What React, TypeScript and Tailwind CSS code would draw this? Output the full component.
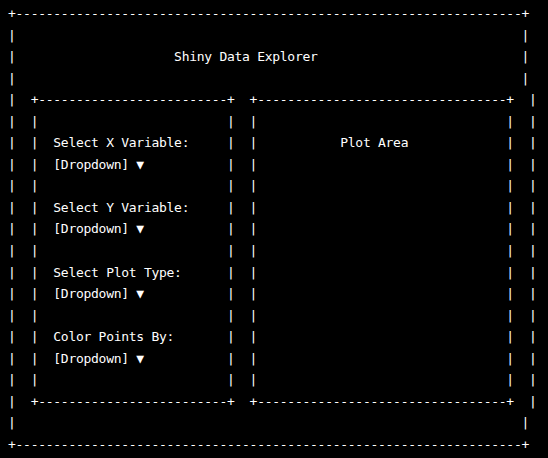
import React from 'react';

const pad = (s: string, n: number) => s + ' '.repeat(Math.max(0, n - s.length));

// left panel cell is 25 chars wide, right panel 33
const row = (left = '', right = '') =>
  '|  |' + pad(left ? '  ' + left : '', 25) + '|  |' + pad(right, 33) + '|  |';

const edge = '|  +' + '-'.repeat(25) + '+  +' + '-'.repeat(33) + '+  |';
const outerRule = '+' + '-'.repeat(67) + '+';
const outerBlank = '|' + ' '.repeat(67) + '|';

const controls = [
  'Select X Variable:',
  'Select Y Variable:',
  'Select Plot Type:',
  'Color Points By:',
];

const lines: string[] = [
  outerRule,
  outerBlank,
  '|' + pad(' '.repeat(21) + 'Shiny Data Explorer', 67) + '|',
  outerBlank,
  edge,
  row(),
  ...controls.flatMap((label, i) => [
    row(label, i === 0 ? ' '.repeat(11) + 'Plot Area' : ''),
    row('[Dropdown] ▼'),
    row(),
  ]),
  edge,
  outerBlank,
  outerRule,
];

export default function App() {
  return (
    <div className="min-h-screen w-full bg-black overflow-hidden">
      <pre className="pl-[8px] pt-[3px] m-0 text-white text-[13px] leading-[21.55px] tracking-[-0.276px] font-['DejaVu_Sans_Mono','Liberation_Mono',monospace] whitespace-pre">
        {lines.join('\n')}
      </pre>
    </div>
  );
}
